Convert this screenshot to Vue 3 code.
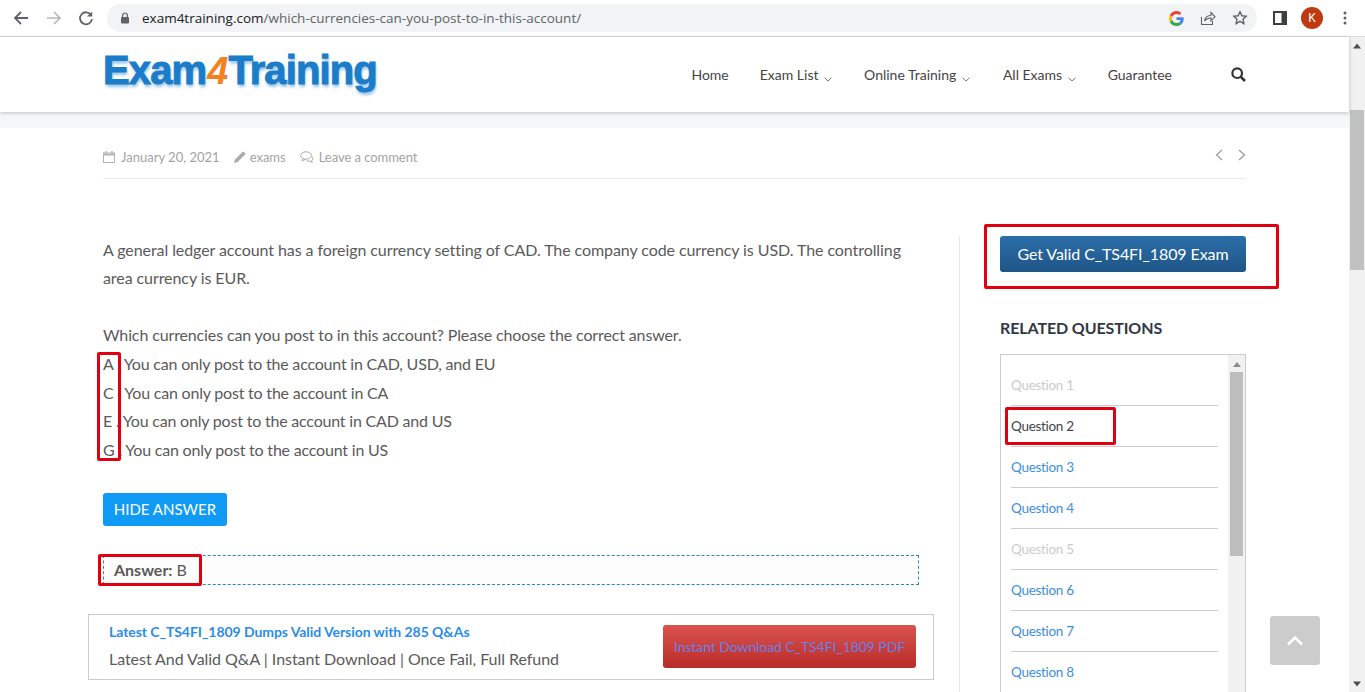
<script setup>
const navItems = [
  { label: 'Home', caret: false },
  { label: 'Exam List', caret: true },
  { label: 'Online Training', caret: true },
  { label: 'All Exams', caret: true },
  { label: 'Guarantee', caret: false }
]
const options = [
  'A . You can only post to the account in CAD, USD, and EU',
  'C . You can only post to the account in CA',
  'E . You can only post to the account in CAD and US',
  'G . You can only post to the account in US'
]
const questions = [
  { label: 'Question 1', state: 'visited' },
  { label: 'Question 2', state: 'current' },
  { label: 'Question 3', state: 'link' },
  { label: 'Question 4', state: 'link' },
  { label: 'Question 5', state: 'visited' },
  { label: 'Question 6', state: 'link' },
  { label: 'Question 7', state: 'link' },
  { label: 'Question 8', state: 'link' }
]
</script>

<template>
  <div class="window">
    <header class="chrome">
      <div class="chrome-nav">
        <svg class="ic" width="16" height="16" viewBox="0 0 16 16" fill="none" stroke="#5f6368" stroke-width="1.8"><path d="M15 8H2M8 2 2 8l6 6"/></svg>
        <svg class="ic" width="16" height="16" viewBox="0 0 16 16" fill="none" stroke="#b4b6b9" stroke-width="1.6"><path d="M1 8h13M8 2l6 6-6 6"/></svg>
        <svg class="ic" width="16" height="16" viewBox="0 0 16 16" fill="none" stroke="#5f6368" stroke-width="1.8"><path d="M13.2 5.2A6 6 0 1 0 14 9"/><path d="M14.2 1.4v5.2H9z" fill="#5f6368" stroke="none"/></svg>
      </div>
      <div class="omnibox">
        <svg width="10" height="12" viewBox="0 0 10 12" class="lock"><path d="M2.6 5V3.4a2.4 2.4 0 0 1 4.8 0V5" fill="none" stroke="#5f6368" stroke-width="1.2"/><rect x="1" y="5" width="8" height="6.5" rx="1" fill="#5f6368"/></svg>
        <span class="url"><span class="host">exam4training.com</span>/which-currencies-can-you-post-to-in-this-account/</span>
        <div class="omni-icons">
          <svg width="15" height="15" viewBox="0 0 48 48"><path fill="#EA4335" d="M24 9.5c3.5 0 6.700 1.300 9.100 3.500l6.800-6.800C35.800 2.400 30.300 0 24 0 14.600 0 6.500 5.400 2.600 13.200l7.900 6.100C12.400 13.700 17.700 9.500 24 9.500z"/><path fill="#4285F4" d="M47 24.500c0-1.600-.1-3.100-.4-4.500H24v9h13c-.6 3-2.300 5.500-4.800 7.200l7.700 6C44.400 38 47 31.800 47 24.500z"/><path fill="#FBBC05" d="M10.500 28.700A14.500 14.500 0 0 1 10.500 19.300l-7.900-6.100a24 24 0 0 0 0 21.600z"/><path fill="#34A853" d="M24 48c6.500 0 11.900-2.100 15.900-5.800l-7.700-6c-2.200 1.400-4.900 2.300-8.200 2.300-6.300 0-11.600-4.200-13.500-9.800l-7.900 6.100C6.500 42.600 14.600 48 24 48z"/></svg>
          <svg width="16" height="16" viewBox="0 0 16 16" fill="none" stroke="#5f6368" stroke-width="1.1"><path d="M1.500 7v7.500h11V11"/><path d="M4.500 11c.6-3.500 3-5.500 6.500-5.500V2.500l4 4.300-4 4V8C8.500 8 6 9 4.500 11z"/></svg>
          <svg width="16" height="16" viewBox="0 0 16 16" fill="none" stroke="#5f6368" stroke-width="1.4"><path d="M8 1.800l1.900 4 4.300.5-3.200 3 .9 4.300L8 11.400l-3.900 2.200.9-4.300-3.200-3 4.300-.5z"/></svg>
        </div>
      </div>
      <div class="chrome-right">
        <svg width="14" height="14" viewBox="0 0 14 14"><rect x="1" y="1" width="12" height="12" fill="none" stroke="#3c4043" stroke-width="2"/><rect x="8.500" y="1" width="4.500" height="12" fill="#3c4043"/></svg>
        <span class="avatar">K</span>
        <svg width="4" height="14" viewBox="0 0 4 14" fill="#5f6368"><circle cx="2" cy="2" r="1.500"/><circle cx="2" cy="7" r="1.500"/><circle cx="2" cy="12" r="1.500"/></svg>
      </div>
    </header>

    <div class="viewport">
      <div class="site">
        <div class="masthead">
          <div class="logo"><span>Exam</span><span class="four">4</span><span>Training</span></div>
          <nav class="menu">
            <a v-for="item in navItems" :key="item.label" class="menu-item">
              {{ item.label }}
              <svg v-if="item.caret" class="caret" width="8" height="5" viewBox="0 0 8 5" fill="none" stroke="#777" stroke-width="1"><path d="M.5.700 4 4l3.500-3.300"/></svg>
            </a>
          </nav>
          <svg class="search" width="15" height="15" viewBox="0 0 15 15" fill="none" stroke="#333" stroke-width="2.200"><circle cx="6.200" cy="6.200" r="4.800"/><path d="m9.800 9.800 4.200 4.200" stroke-width="2.600"/></svg>
        </div>
        <div class="band"></div>

        <main class="content">
          <div class="meta">
            <svg width="12" height="12" viewBox="0 0 12 12" fill="none" stroke="#b5b5b5"><rect x=".5" y="2" width="11" height="9.500"/><path d="M.5 3.500h11" stroke-width="2"/><path d="M3 0v2.500M9 0v2.500" stroke-width="1.500"/></svg>
            <span class="meta-text date">January 20, 2021</span>
            <svg width="12" height="12" viewBox="0 0 12 12" fill="#aaa"><path d="M0 12l1-3.600L8.500.9a1 1 0 0 1 1.400 0l1.200 1.200a1 1 0 0 1 0 1.400L3.600 11z"/></svg>
            <span class="meta-text author">exams</span>
            <svg width="14" height="12" viewBox="0 0 14 12" fill="none" stroke="#aaa"><ellipse cx="6" cy="4.500" rx="5.300" ry="3.700"/><path d="M3 8 2 10l3-1.600M12 5.500c1.500 1.500 1 3-.3 4l.6 1.800-2.700-1.200c-1 .2-2 0-3-.5"/></svg>
            <span class="meta-text comment">Leave a comment</span>
            <div class="pager">
              <svg width="8" height="12" viewBox="0 0 8 12" fill="none" stroke="#999" stroke-width="1.200"><path d="M7 1 1.500 6 7 11"/></svg>
              <svg width="8" height="12" viewBox="0 0 8 12" fill="none" stroke="#999" stroke-width="1.200"><path d="M1 1l5.500 5L1 11"/></svg>
            </div>
          </div>

          <div class="columns">
            <article class="article">
              <p class="para lead">A general ledger account has a foreign currency setting of CAD. The company code currency is USD. The controlling area currency is EUR.</p>
              <p class="para question">Which currencies can you post to in this account? Please choose the correct answer.</p>
              <p v-for="opt in options" :key="opt" class="para option">{{ opt }}</p>
              <button class="hide-btn">HIDE ANSWER</button>
              <div class="answer"><strong>Answer:</strong> B</div>
              <div class="promo">
                <div class="promo-copy">
                  <a class="promo-title">Latest C_TS4FI_1809 Dumps Valid Version with 285 Q&amp;As</a>
                  <p class="promo-sub">Latest And Valid Q&amp;A | Instant Download | Once Fail, Full Refund</p>
                </div>
                <a class="promo-btn">Instant Download C_TS4FI_1809 PDF</a>
              </div>
            </article>

            <aside class="sidebar">
              <a class="exam-btn">Get Valid C_TS4FI_1809 Exam</a>
              <h3 class="side-title">RELATED QUESTIONS</h3>
              <div class="qbox">
                <ul class="qlist">
                  <li v-for="q in questions" :key="q.label" :class="['qitem', q.state]">{{ q.label }}</li>
                </ul>
                <div class="qscroll">
                  <svg width="8" height="5" viewBox="0 0 8 5" fill="#8a8a8a"><path d="M4 0l4 5H0z"/></svg>
                  <div class="qthumb"></div>
                </div>
              </div>
            </aside>
          </div>
        </main>
      </div>

      <div class="pagebar">
        <svg width="10" height="6" viewBox="0 0 10 6" fill="#505050"><path d="M5 .5l4 5H1z"/></svg>
        <div class="pagethumb"></div>
        <svg class="down" width="10" height="6" viewBox="0 0 10 6" fill="#505050"><path d="M5 5.500l4-5H1z"/></svg>
      </div>

      <a class="to-top">
        <svg width="18" height="11" viewBox="0 0 18 11" fill="none" stroke="#fff" stroke-width="2.600"><path d="M2 9.500 9 2.500l7 7"/></svg>
      </a>
    </div>

    <div class="mark mark-letters"></div>
    <div class="mark mark-exam"></div>
    <div class="mark mark-q2"></div>
    <div class="mark mark-answer"></div>
  </div>
</template>

<style>
html, body { margin: 0; height: 100%; overflow: hidden; background: #fff; }
</style>

<style scoped>
.window { position: relative; width: 1365px; height: 692px; overflow: hidden; font-family: Lato, "Noto Sans", sans-serif; color: #555; background: #fff; }

.chrome { height: 36px; border-bottom: 1px solid #dadce0; display: flex; align-items: center; background: #fff; }
.chrome-nav { display: flex; gap: 16.5px; align-items: center; width: 107px; padding-left: 13px; box-sizing: border-box; }
.ic { flex: none; }
.omnibox { width: 1150px; height: 28px; border-radius: 14px; background: #f1f3f4; display: flex; align-items: center; box-sizing: border-box; padding-left: 13px; }
.lock { flex: none; }
.url { margin-left: 12px; font: 13.5px "Open Sans", sans-serif; color: #5f6368; white-space: nowrap; }
.host { color: #202124; }
.omni-icons { margin-left: auto; display: flex; align-items: center; gap: 16px; padding-right: 9px; }
.chrome-right { flex: 1; display: flex; align-items: center; padding-left: 16px; }
.avatar { width: 22px; height: 22px; border-radius: 50%; background: #c0390e; color: #fff; font: 12px Roboto, sans-serif; display: flex; align-items: center; justify-content: center; margin-left: 14px; }
.chrome-right svg:last-child { margin-left: 20px; }

.viewport { position: relative; display: flex; height: 655px; }
.site { width: 1349px; flex: none; }

.masthead { position: relative; height: 75px; display: flex; align-items: center; padding: 0 103px; background: #fff; box-shadow: 0 1px 4px rgba(0,0,0,.22); box-sizing: border-box; width: 1349px; z-index: 1; }
.logo { font: 700 40px/1 "Liberation Sans", sans-serif; color: #1b7cc9; letter-spacing: -.9px; -webkit-text-stroke: 1px #1b7cc9; text-shadow: 1px 3px 3px rgba(27,124,201,.45); margin-top: -10px; white-space: nowrap; }
.four { color: #f4811f; -webkit-text-stroke: 0 transparent; font-style: italic; font-weight: 700; font-size: 38px; margin: 0 1px; text-shadow: none; }
.menu { display: flex; gap: 32px; margin-left: auto; }
.menu-item { font-size: 14px; color: #444; white-space: nowrap; }
.menu-item:first-child { margin-right: -1px; }
.menu-item:nth-child(3) { margin-right: 1px; }
.caret { margin-left: 2px; vertical-align: -2px; }
.search { margin-left: 59px; }

.band { height: 16px; background: #f5f6f8; }

.content { padding: 20px 103px 0; }
.meta { display: flex; align-items: center; height: 17px; padding-bottom: 13px; border-bottom: 1px solid #e8e8e8; width: 1143px; }
.meta-text { font-size: 13px; color: #a3a3a3; margin-left: 6px; }
.date { margin-right: 14px; }
.author { margin-left: 4px; margin-right: 14px; }
.comment { margin-left: 5px; letter-spacing: -.05px; }
.pager { margin-left: auto; display: flex; gap: 15px; margin-top: -4px; }

.columns { display: flex; margin-top: 57px; width: 1143px; }
.article { width: 857px; flex: none; box-sizing: border-box; border-right: 1px solid #e8e8e8; padding-right: 40px; height: 460px; }
.para { margin: 0; font-size: 16px; line-height: 28.6px; letter-spacing: -.08px; color: #5a5a5a; }
.lead { margin-top: -.4px; }
.question { margin-top: 28.6px; letter-spacing: -.13px; }
.option { letter-spacing: -.2px; }
.hide-btn { display: block; margin-top: 28.4px; width: 124px; height: 33px; padding: 0; border: 0; border-radius: 3px; background: #0f9af6; color: #fff; font: 15px Lato, sans-serif; }
.answer { margin-top: 29px; height: 30px; width: 816px; box-sizing: border-box; border: 1px dashed #2b84bd; background: #fdfdfd; padding-left: 10px; font-size: 16px; line-height: 28px; color: #5a5a5a; }
.promo { margin: 29px 0 0 -15px; width: 846px; height: 66px; box-sizing: border-box; border: 1px solid #ccc; display: flex; align-items: center; justify-content: space-between; padding: 0 17px 0 20px; background: #fff; }
.promo-copy { margin-top: -1px; }
.promo-title { display: block; font-size: 14px; font-weight: 700; color: #2b8de8; line-height: 20px; letter-spacing: -.06px; }
.promo-sub { margin: 6px 0 0; font-size: 16px; line-height: 22px; color: #5a5a5a; letter-spacing: -.05px; }
.promo-btn { width: 253px; height: 43px; border-radius: 3px; background: linear-gradient(#d9534f, #b92c28); color: #6b7fe6; font-size: 14px; letter-spacing: -.08px; display: flex; align-items: center; justify-content: center; }

.sidebar { margin-left: 40px; width: 246px; flex: none; }
.exam-btn { display: flex; align-items: center; justify-content: center; height: 36px; padding-bottom: 2px; box-sizing: border-box; border-radius: 3px; background: linear-gradient(#2b6ea9, #1f5587); color: #fff; font-size: 16px; letter-spacing: -.08px; }
.side-title { margin: 46px 0 0; font-size: 16px; line-height: 20px; font-weight: 700; color: #333844; letter-spacing: -.1px; }
.qbox { display: flex; margin-top: 16px; height: 400px; box-sizing: border-box; border: 1px solid #ccc; }
.qlist { list-style: none; margin: 0; padding: 10px 0 0 10px; width: 217px; flex: none; }
.qitem { width: 207px; height: 40px; line-height: 40px; border-bottom: 1px solid #ccc; font-size: 13.5px; letter-spacing: -.3px; }
.visited { color: #ccc; }
.current { color: #444; }
.link { color: #3d8fdc; }
.qscroll { width: 17px; background: #f1f1f1; display: flex; flex-direction: column; align-items: center; padding-top: 7px; box-sizing: border-box; }
.qthumb { width: 13px; height: 184px; margin-top: 5px; background: #bdbdbd; }

.pagebar { flex: 1; background: #f1f1f1; display: flex; flex-direction: column; align-items: center; padding-top: 6px; box-sizing: border-box; }
.pagethumb { width: 14px; height: 160px; margin-top: 61px; background: #c1c1c1; }
.down { margin-top: auto; margin-bottom: 5px; }

.to-top { position: absolute; left: 1270px; top: 579px; width: 50px; height: 49px; border-radius: 3px; background: #ccc; display: flex; align-items: center; justify-content: center; }

.mark { position: absolute; box-sizing: border-box; border: 3px solid #e0000f; border-radius: 2px; pointer-events: none; }
.mark-letters { left: 97px; top: 352px; width: 24px; height: 109px; }
.mark-exam { left: 984px; top: 224px; width: 295px; height: 65px; }
.mark-q2 { left: 1005px; top: 407px; width: 111px; height: 38px; }
.mark-answer { left: 98px; top: 554px; width: 104px; height: 32px; }
</style>
